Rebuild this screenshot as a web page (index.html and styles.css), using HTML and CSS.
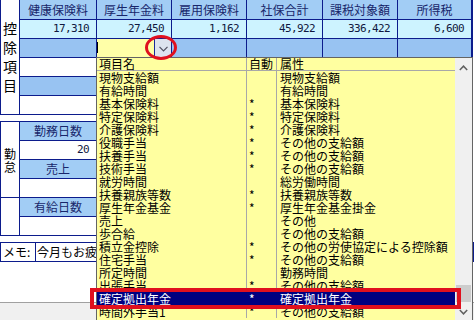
FILE: index.html
```html
<!DOCTYPE html>
<html>
<head>
    <title>給与明細入力</title>
    <link rel="stylesheet" href="styles.css">
</head>
<body>
    <div class="page">
        <div class="grid koujo">
            <div class="cell label"><span>控</span><span>除</span><span>項</span><span>目</span></div>
            <div class="cell head">健康保険料</div>
            <div class="cell head">厚生年金料</div>
            <div class="cell head">雇用保険料</div>
            <div class="cell head">社保合計</div>
            <div class="cell head">課税対象額</div>
            <div class="cell head">所得税</div>

            <div class="cell val">17,310</div>
            <div class="cell val">27,450</div>
            <div class="cell val">1,162</div>
            <div class="cell val">45,922</div>
            <div class="cell val">336,422</div>
            <div class="cell val">6,600</div>

            <div class="cell sub"></div>
            <div class="cell combo">
                <span class="caret"></span>
                <span class="combo-btn">
                    <svg width="9" height="6" viewBox="0 0 9 6"><polyline points="0.5,0.8 4.5,4.8 8.5,0.8" fill="none" stroke="#505060" stroke-width="1.2"/></svg>
                </span>
            </div>
            <div class="cell sub"></div>
            <div class="cell sub"></div>
            <div class="cell sub"></div>
            <div class="cell sub"></div>

            <div class="cell"></div><div class="cell"></div><div class="cell"></div>
            <div class="cell"></div><div class="cell"></div><div class="cell"></div>
            <div class="cell sub"></div><div class="cell sub"></div><div class="cell sub"></div>
            <div class="cell sub"></div><div class="cell sub"></div><div class="cell sub"></div>
            <div class="cell"></div><div class="cell"></div><div class="cell"></div>
            <div class="cell"></div><div class="cell"></div><div class="cell"></div>
        </div>

        <div class="grid kintai">
            <div class="cell label label-top"><span>勤</span><span>怠</span></div>
            <div class="cell label label-bottom"></div>
            <div class="cell head">勤務日数</div>
            <div class="cell val">20</div>
            <div class="cell head">売上</div>
            <div class="cell"></div>
            <div class="cell head">有給日数</div>
            <div class="cell"></div>
        </div>

        <div class="memo">
            <div class="memo-label">メモ:</div>
            <div class="memo-text">今月もお疲れ様でした。</div>
        </div>

        <div class="footer"></div>

        <div class="droplist">
            <div class="list">
                <div class="row list-head"><span>項目名</span><span>自動</span><span>属性</span></div>
                <div class="row"><span>現物支給額</span><span></span><span>現物支給額</span></div>
                <div class="row"><span>有給時間</span><span></span><span>有給時間</span></div>
                <div class="row"><span>基本保険料</span><span>*</span><span>基本保険料</span></div>
                <div class="row"><span>特定保険料</span><span>*</span><span>特定保険料</span></div>
                <div class="row"><span>介護保険料</span><span>*</span><span>介護保険料</span></div>
                <div class="row"><span>役職手当</span><span>*</span><span>その他の支給額</span></div>
                <div class="row"><span>扶養手当</span><span>*</span><span>その他の支給額</span></div>
                <div class="row"><span>技術手当</span><span>*</span><span>その他の支給額</span></div>
                <div class="row"><span>就労時間</span><span></span><span>総労働時間</span></div>
                <div class="row"><span>扶養親族等数</span><span>*</span><span>扶養親族等数</span></div>
                <div class="row"><span>厚生年金基金</span><span>*</span><span>厚生年金基金掛金</span></div>
                <div class="row"><span>売上</span><span></span><span>その他</span></div>
                <div class="row"><span>歩合給</span><span></span><span>その他の支給額</span></div>
                <div class="row"><span>積立金控除</span><span>*</span><span>その他の労使協定による控除額</span></div>
                <div class="row"><span>住宅手当</span><span>*</span><span>その他の支給額</span></div>
                <div class="row"><span>所定時間</span><span></span><span>勤務時間</span></div>
                <div class="row"><span>出張手当</span><span>*</span><span>その他の支給額</span></div>
                <div class="row selected"><span>確定拠出年金</span><span>*</span><span>確定拠出年金</span></div>
                <div class="row"><span>時間外手当1</span><span>*</span><span>その他の支給額</span></div>
            </div>
            <div class="scrollbar">
                <div class="arrow arrow-up">
                    <svg width="9" height="6" viewBox="0 0 9 6"><polyline points="0.8,5 4.5,1.2 8.2,5" fill="none" stroke="#606060" stroke-width="1.5"/></svg>
                </div>
                <div class="track"><div class="thumb"></div></div>
                <div class="arrow arrow-down">
                    <svg width="9" height="6" viewBox="0 0 9 6"><polyline points="0.8,1 4.5,4.8 8.2,1" fill="none" stroke="#606060" stroke-width="1.5"/></svg>
                </div>
            </div>
        </div>

        <div class="mark-circle"></div>
        <div class="mark-box"></div>
    </div>
</body>
</html>
```

FILE: styles.css
```css
body {
    margin: 0;
    font-family: "Noto Sans CJK JP", sans-serif;
    font-size: 12px;
    background-color: #fff;
}
.page {
    position: relative;
    width: 474px;
    height: 320px;
    overflow: hidden;
}

/* grids */
.grid {
    display: grid;
    gap: 1px;
    width: max-content;
    background: #0c1c8c;
    border: 1px solid #0c1c8c;
}
.koujo {
    grid-template-columns: 18px 76px 74px 74px 75px 74px 73px;
    grid-template-rows: 19px repeat(5, 18px);
    border-top: 0;
    border-right-width: 2px;
}
.kintai {
    grid-template-columns: 18px 76px;
    grid-template-rows: repeat(6, 18px);
    margin-top: 6px;
}
.cell {
    background: #fff;
    color: #18266a;
    line-height: 18px;
    text-align: center;
    white-space: nowrap;
}
.koujo .head {
    line-height: 19px;
}
.head {
    background: #a2cdf5;
}
.sub {
    background: #98c3f2;
}
.val {
    background: #cdf3ff;
    color: #101840;
    text-align: right;
    padding-right: 7px;
    font-family: "DejaVu Sans Mono", monospace;
    font-size: 11px;
    letter-spacing: -0.62px;
}
.kintai .val {
    background: #fff;
}
.label {
    grid-row: 1 / 7;
    display: flex;
    flex-direction: column;
    justify-content: center;
    align-items: center;
    color: #000;
    font-size: 14px;
    line-height: 19px;
}
.label-top {
    grid-row: 1 / 5;
    font-size: 12px;
    line-height: 13px;
}
.label-bottom {
    grid-row: 5 / 7;
}

/* combo box */
.combo {
    display: flex;
    background: #ffffa8;
}
.caret {
    width: 1px;
    height: 11px;
    margin: 3px 0 0 0;
    background: #000;
}
.combo-btn {
    margin-left: auto;
    width: 17px;
    border-left: 1px solid #1a2a9a;
    background: #dde3ee;
    display: flex;
    align-items: center;
    justify-content: center;
    padding-top: 2px;
    box-sizing: border-box;
}

/* memo */
.memo {
    display: flex;
    width: 472px;
    height: 18px;
    margin-top: 6px;
    border: 1px solid #0c1c8c;
    line-height: 18px;
    color: #000;
}
.memo-label {
    width: 32px;
    padding-left: 2px;
    border-right: 1px solid #0c1c8c;
}
.memo-text {
    padding-left: 1px;
    white-space: nowrap;
}
.footer {
    height: 20px;
    margin-top: 40px;
    background: #f0f0f0;
    border-top: 1px solid #a0a0a0;
}

/* drop down list */
.droplist {
    position: absolute;
    left: 96px;
    top: 57px;
    width: 377px;
    height: 264px;
    box-sizing: border-box;
    border: 1px solid #646464;
    background: #ffffa0;
    display: flex;
    color: #000;
}
.list {
    flex: 1;
}
.row {
    display: grid;
    grid-template-columns: 150px 30px 1fr;
    height: 13px;
    line-height: 13px;
}
.row span {
    padding-left: 2px;
    box-sizing: border-box;
    white-space: nowrap;
}
.row span:nth-child(-n+2) {
    border-right: 1px solid #a8a8a8;
}
.row span:nth-child(3) {
    padding-left: 3px;
}
.list-head {
    line-height: 12px;
    border-bottom: 1px solid #a8a8a8;
    box-sizing: border-box;
}
.selected {
    background: #000080;
    color: #fff;
}
.selected span:nth-child(-n+2) {
    border-right-color: #000080;
}
.scrollbar {
    width: 17px;
    background: #f0f0f0;
    display: flex;
    flex-direction: column;
}
.arrow {
    display: flex;
    align-items: center;
    justify-content: center;
}
.arrow-up {
    height: 19px;
}
.arrow-down {
    height: 17px;
}
.track {
    flex: 1;
}
.thumb {
    height: 17px;
    margin: 208px 1px 0 1px;
    background: #cdcdcd;
}

/* red annotations */
.mark-circle {
    position: absolute;
    left: 145px;
    top: 35px;
    width: 32px;
    height: 25px;
    box-sizing: border-box;
    border: 3px solid #e0101e;
    border-radius: 50%;
}
.mark-box {
    position: absolute;
    left: 90px;
    top: 288px;
    width: 371px;
    height: 21px;
    box-sizing: border-box;
    border: 4px solid #e0101e;
}
```
